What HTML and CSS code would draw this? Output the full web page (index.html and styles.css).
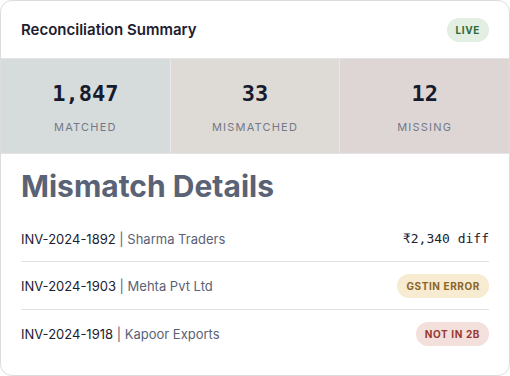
FILE: index.html
```html
<!DOCTYPE html>
<html lang="en">
<head>
<meta charset="UTF-8" />
<title>Reconciliation Summary</title>
<link rel="stylesheet" href="styles.css">
</head>
<body>
  <div class="card">
    <div class="card-head">
      <h2 class="title">Reconciliation Summary</h2>
      <span class="pill live">LIVE</span>
    </div>

    <div class="stats">
      <div class="stat matched">
        <div class="stat-num">1,847</div>
        <div class="stat-label">MATCHED</div>
      </div>
      <div class="stat mismatched">
        <div class="stat-num">33</div>
        <div class="stat-label">MISMATCHED</div>
      </div>
      <div class="stat missing">
        <div class="stat-num">12</div>
        <div class="stat-label">MISSING</div>
      </div>
    </div>

    <div class="details">
      <h1 class="details-title">Mismatch Details</h1>
      <ul class="rows">
        <li class="row">
          <span class="inv">INV-2024-1892 <span class="party">| Sharma Traders</span></span>
          <span class="diff">₹2,340 diff</span>
        </li>
        <li class="row">
          <span class="inv">INV-2024-1903 <span class="party">| Mehta Pvt Ltd</span></span>
          <span class="pill warn">GSTIN ERROR</span>
        </li>
        <li class="row">
          <span class="inv">INV-2024-1918 <span class="party">| Kapoor Exports</span></span>
          <span class="pill danger">NOT IN 2B</span>
        </li>
      </ul>
    </div>
  </div>
</body>
</html>
```

FILE: styles.css
```css
* {
  box-sizing: border-box;
}
body {
  margin: 0;
  background: #fff;
  font-family: 'Inter', 'Noto Sans', sans-serif;
  color: #1c2030;
}
.card {
  width: 510px;
  height: 376px;
  border: 1px solid #dcdcdc;
  border-radius: 12px;
  overflow: hidden;
  background: #fff;
}
.card-head {
  display: flex;
  justify-content: space-between;
  align-items: center;
  height: 57px;
  padding: 0 20px;
}
.title {
  margin: 0;
  font-size: 15px;
  font-weight: 600;
  color: #1c2030;
}
.pill {
  display: inline-flex;
  align-items: center;
  height: 24px;
  padding: 0 9px;
  border-radius: 12px;
  font-size: 10px;
  font-weight: 700;
  letter-spacing: 0.6px;
}
.pill.live {
  background: #e2efe2;
  color: #2e6a3b;
}
.pill.warn {
  background: #f7ebd1;
  color: #8a6526;
}
.pill.danger {
  background: #f3dfdb;
  color: #973a33;
}
.stats {
  display: grid;
  grid-template-columns: repeat(3, 1fr);
  gap: 1px;
  background: #e8e8e8;
  border-top: 1px solid #e4e4e4;
  border-bottom: 1px solid #e4e4e4;
}
.stat {
  height: 94px;
  display: flex;
  flex-direction: column;
  align-items: center;
  padding-top: 22px;
}
.stat.matched { background: #d6dcdc; }
.stat.mismatched { background: #dedbd6; }
.stat.missing { background: #ded6d5; }
.stat-num {
  font-family: 'DejaVu Sans Mono', monospace;
  font-weight: 700;
  font-size: 22px;
  color: #161b2e;
}
.stat-label {
  margin-top: 14px;
  font-size: 11px;
  letter-spacing: 1.2px;
  color: #737888;
}
.details {
  padding: 0 20px;
}
.details-title {
  margin: 14px 0 12px;
  font-size: 30px;
  font-weight: 700;
  color: #5a6275;
}
.rows {
  list-style: none;
  margin: 0;
  padding: 0;
}
.row {
  display: flex;
  justify-content: space-between;
  align-items: center;
  min-height: 46px;
  padding: 11.5px 0;
  border-bottom: 1px solid #e2e2e2;
  font-size: 13px;
}
.row:last-child {
  border-bottom: none;
}
.inv {
  color: #1c2030;
}
.party {
  color: #5a6275;
}
.diff {
  font-family: 'DejaVu Sans Mono', monospace;
  font-size: 13px;
  color: #1c2030;
}
```
